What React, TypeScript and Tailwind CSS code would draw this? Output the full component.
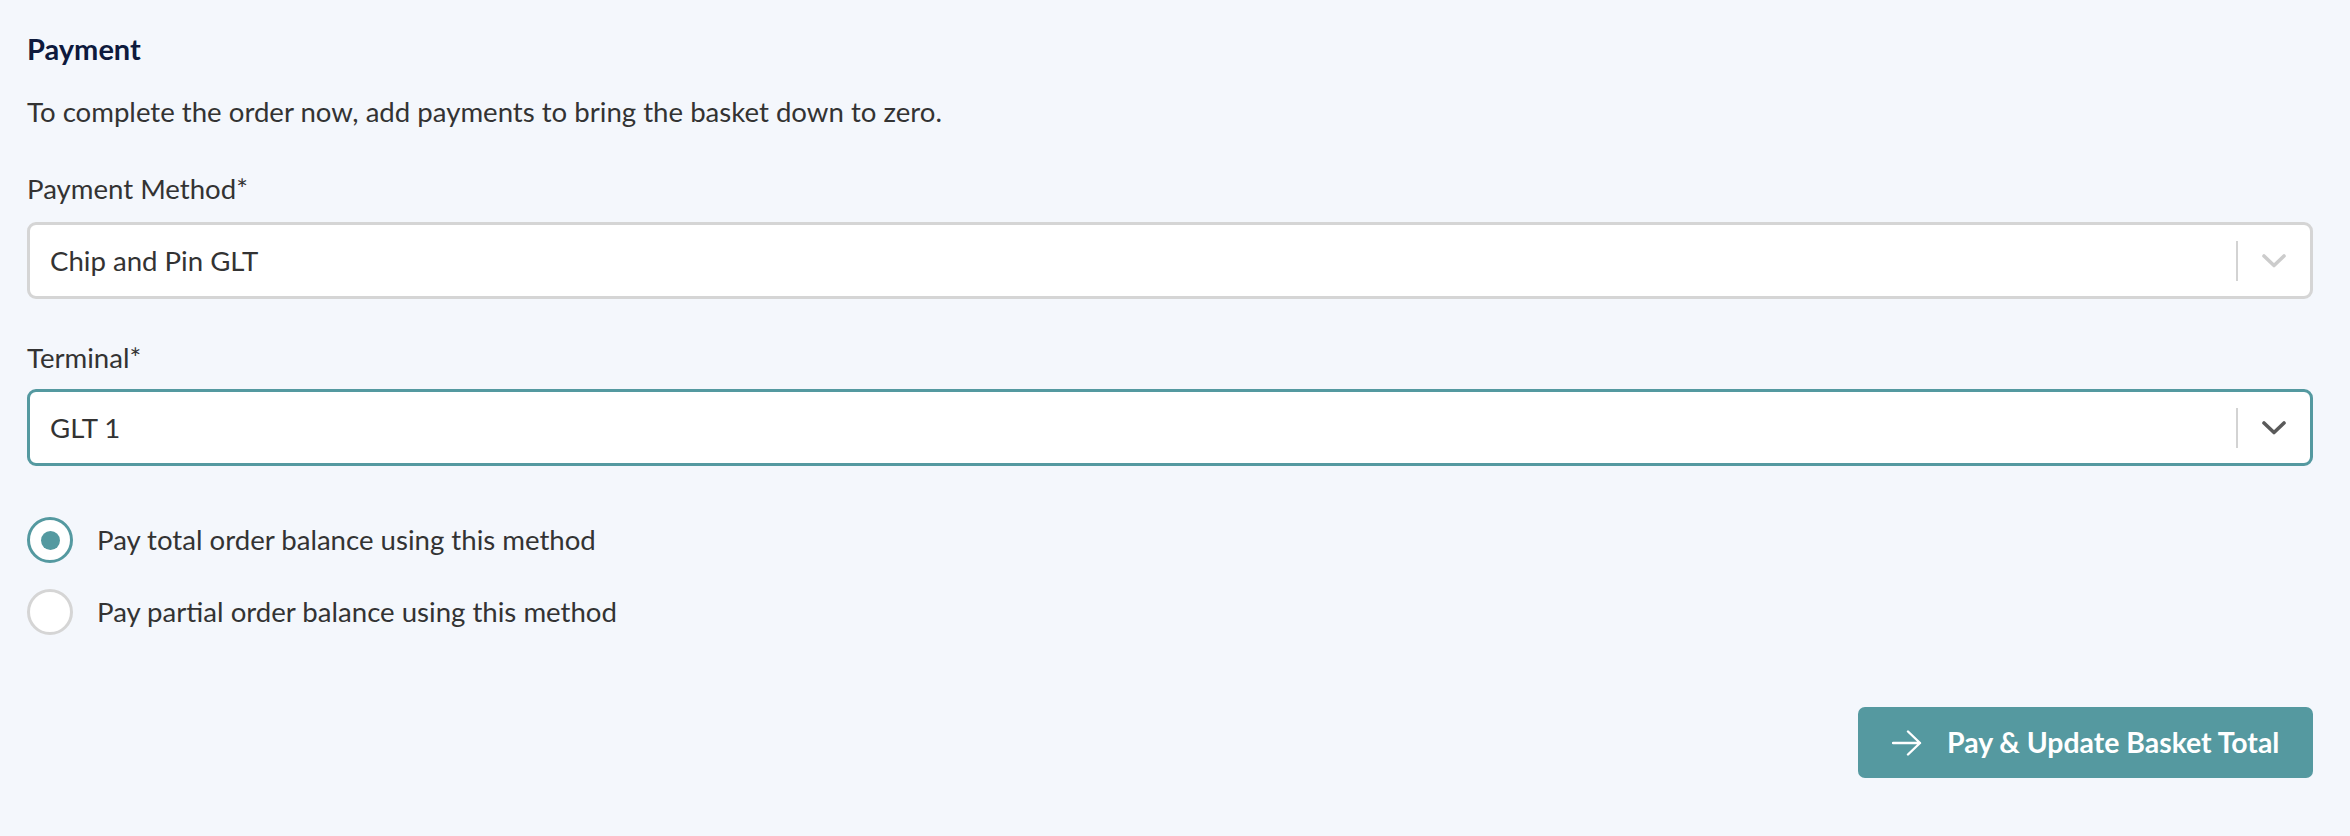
import React from "react";

const font = { fontFamily: "Lato, 'Noto Sans', sans-serif" };

function Chevron({ color }: { color: string }) {
  return (
    <svg width="24" height="14" viewBox="0 0 24 14" fill="none">
      <path d="M2 2 L12 11.5 L22 2" stroke={color} strokeWidth="3.6" strokeLinecap="round" strokeLinejoin="round" />
    </svg>
  );
}

function Select({ value, focused }: { value: string; focused?: boolean }) {
  return (
    <div
      className={
        "flex h-[77px] items-center rounded-[9px] border-[3px] bg-white " +
        (focused ? "border-[#5499a0]" : "border-[#d5d5d5]")
      }
    >
      <div className="flex-1 pl-[20px] text-[27.6px] text-[#333333]">{value}</div>
      <div className="h-[40px] w-[2px] bg-[#d3d3d3]" />
      <div className="flex items-center px-[24px]">
        <Chevron color={focused ? "#5a5a5a" : "#cccccc"} />
      </div>
    </div>
  );
}

function Radio({ label, checked }: { label: string; checked?: boolean }) {
  return (
    <label className="flex h-[48px] items-center gap-[24px]">
      <span
        className={
          "flex h-[46px] w-[46px] items-center justify-center rounded-full border-[3px] bg-white " +
          (checked ? "border-[#5499a0]" : "border-[#d5d5d5]")
        }
      >
        {checked && <span className="h-[19px] w-[19px] rounded-full bg-[#5499a0]" />}
      </span>
      <span className="text-[27.6px] leading-[36px] text-[#333333]">{label}</span>
    </label>
  );
}

export default function App() {
  return (
    <div className="min-h-[836px] w-full bg-[#f4f7fc] pl-[27px] pr-[37px] pt-[31px]" style={font}>
      <h2 className="text-[29px] font-bold leading-[36px] text-[#0e1a3d]">Payment</h2>
      <p className="mt-[27px] text-[27.6px] leading-[36px] text-[#333333]">
        To complete the order now, add payments to bring the basket down to zero.
      </p>

      <div className="mt-[41px] text-[27.6px] leading-[36px] text-[#333333]">Payment Method*</div>
      <div className="mt-[15px]">
        <Select value="Chip and Pin GLT" />
      </div>

      <div className="mt-[41px] text-[27.6px] leading-[36px] text-[#333333]">Terminal*</div>
      <div className="mt-[13px]">
        <Select value="GLT 1" focused />
      </div>

      <div className="mt-[50px] flex flex-col gap-[24px]">
        <Radio label="Pay total order balance using this method" checked />
        <Radio label="Pay partial order balance using this method" />
      </div>

      <div className="mt-[71px] flex justify-end">
        <button className="flex h-[71px] w-[455px] items-center gap-[25px] rounded-[7px] bg-[#5599a0] pl-[34px] text-[28.4px] font-bold text-white">
          <svg width="30" height="26" viewBox="0 0 30 26" fill="none">
            <path d="M1 13 H28 M16 1.5 L28 13 L16 24.5" stroke="white" strokeWidth="2.4" strokeLinecap="round" strokeLinejoin="round" />
          </svg>
          <span>Pay &amp; Update Basket Total</span>
        </button>
      </div>
    </div>
  );
}
